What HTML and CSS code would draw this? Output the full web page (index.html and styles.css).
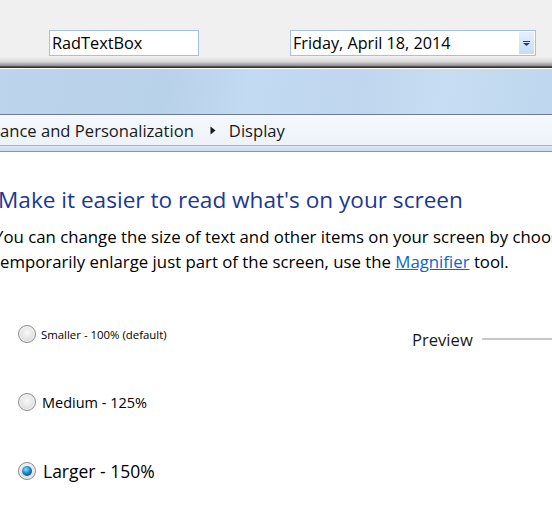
FILE: index.html
```html
<!DOCTYPE html>
<html>
<head>
<meta charset="utf-8">
<link rel="stylesheet" href="styles.css">
</head>
<body>
<div class="toolbar">
  <div class="textbox">RadTextBox</div>
  <div class="datebox">
    <span class="date-text">Friday, April 18, 2014</span>
    <span class="drop"><svg width="7" height="5" viewBox="0 0 7 5"><rect x="0" y="0" width="7" height="1" fill="#1c3f94"/><path d="M0 2 H7 L3.5 5 Z" fill="#1c3f94"/></svg></span>
  </div>
</div>
<div class="shade"></div>
<div class="header"></div>
<div class="crumbs">
  <span>ance and Personalization</span>
  <svg class="arrow" width="6" height="9" viewBox="0 0 6 9"><path d="M0.5 0.5 L5.5 4.5 L0.5 8.5 Z" fill="#1a1a1a"/></svg>
  <span>Display</span>
</div>
<div class="band"></div>
<div class="content">
  <h1 class="title">Make it easier to read what's on your screen</h1>
  <p class="desc">You can change the size of text and other items on your screen by choosing one of these options. To<br>temporarily enlarge just part of the screen, use the <a href="#" class="link">Magnifier</a> tool.</p>
  <div class="options-area">
    <div class="options">
      <label class="opt opt-small"><span class="radio"></span><span>Smaller - 100% (default)</span></label>
      <label class="opt opt-medium"><span class="radio"></span><span>Medium - 125%</span></label>
      <label class="opt opt-large"><span class="radio checked"></span><span>Larger - 150%</span></label>
    </div>
    <div class="preview">
      <span class="preview-label">Preview</span>
      <span class="preview-line"></span>
    </div>
  </div>
</div>
</body>
</html>
```
FILE: styles.css
```css
html, body {
  margin: 0;
  padding: 0;
  background: #ffffff;
  overflow: hidden;
  width: 552px;
  height: 510px;
}
body {
  font-family: "Open Sans", "Noto Sans", sans-serif;
  color: #000;
}
.toolbar {
  height: 57px;
  background: #f0f0f0;
  box-sizing: border-box;
  padding-top: 30px;
  display: flex;
  align-items: flex-start;
}
.textbox {
  margin-left: 49px;
  width: 150px;
  height: 26px;
  box-sizing: border-box;
  border: 1px solid #a4c0ea;
  background: #fff;
  font-size: 16.3px;
  line-height: 24px;
  padding-left: 2px;
}
.datebox {
  margin-left: 91px;
  width: 246px;
  height: 26px;
  box-sizing: border-box;
  border: 1px solid #a4c0ea;
  background: #fff;
  display: flex;
  align-items: stretch;
}
.date-text {
  flex: 1;
  font-size: 16.2px;
  line-height: 24px;
  padding-left: 2px;
}
.drop {
  width: 15px;
  margin: 1px 1px 1px 0;
  background: linear-gradient(#e6effc, #c8dcf6);
  display: flex;
  align-items: center;
  justify-content: center;
}
.shade {
  height: 11px;
  background: linear-gradient(#eeeeee 0%, #dcdcdc 40%, #9a9a9a 75%, #3a3a3a 92%, #1a1a1a 100%);
  border-bottom: 1px solid #ffffff;
}
.header {
  height: 45px;
  background: linear-gradient(100deg, #bcd4ec 0%, #b8d2ea 30%, #c2daf2 45%, #bfd6ee 65%, #c6ddf3 80%, #bfd7ee 100%);
  border-bottom: 1px solid #6d7c8c;
}
.crumbs {
  height: 30px;
  background: linear-gradient(#f5f9fd, #edf3f9);
  border-bottom: 1px solid #a6b4c2;
  display: flex;
  align-items: center;
  font-size: 16.6px;
  color: #1a1a1a;
}
.crumbs .arrow {
  margin: 0 13px 0 16px;
}
.band {
  height: 5px;
  background: linear-gradient(#dbe8f5, #c9dbee);
  border-bottom: 1px solid #8a96a2;
}
.content {
  margin-left: -4px;
}
.title {
  margin: 33px 0 0 2px;
  font-size: 22.6px;
  font-weight: normal;
  color: #1a3896;
  line-height: 30px;
}
.desc {
  margin: 9px 0 0 -2px;
  font-size: 16.8px;
  line-height: 25px;
  white-space: nowrap;
  width: 620px;
}
.link {
  color: #0a66cc;
  text-decoration: underline;
}
.options-area {
  display: flex;
  margin-top: 50px;
}
.options {
  flex: none;
  width: 390px;
  box-sizing: border-box;
  padding-left: 22px;
  display: flex;
  flex-direction: column;
}
.opt {
  display: flex;
  align-items: center;
  height: 20px;
}
.opt-small { font-size: 11.4px; }
.opt-medium { font-size: 14.5px; margin-top: 48px; }
.opt-large { font-size: 17.5px; margin-top: 49px; }
.opt-medium .radio { margin-right: 6px; }
.opt-large .radio { margin-right: 7px; }
.radio {
  width: 18px;
  height: 18px;
  box-sizing: border-box;
  border-radius: 50%;
  border: 1px solid #8c8c8c;
  background: radial-gradient(circle at 50% 40%, #f8f8f8 0%, #e4e4e4 55%, #c8c8c8 100%);
  box-shadow: inset 0 0 0 1px #f6f6f6;
  margin-right: 5px;
  flex: none;
  position: relative;
}
.radio.checked::after {
  content: "";
  position: absolute;
  left: 3px;
  top: 3px;
  width: 10px;
  height: 10px;
  border-radius: 50%;
  background: radial-gradient(circle at 40% 35%, #8fe0ff 0%, #2a9ad6 35%, #0b4f8c 75%, #07294c 100%);
}
.preview {
  flex: none;
  display: flex;
  align-items: center;
  height: 20px;
  margin-top: 5px;
  padding-left: 26px;
}
.preview-label {
  font-size: 16.6px;
  color: #1a1a1a;
}
.preview-line {
  width: 80px;
  height: 2px;
  background: #c8c8c8;
  margin-left: 9px;
}
```
